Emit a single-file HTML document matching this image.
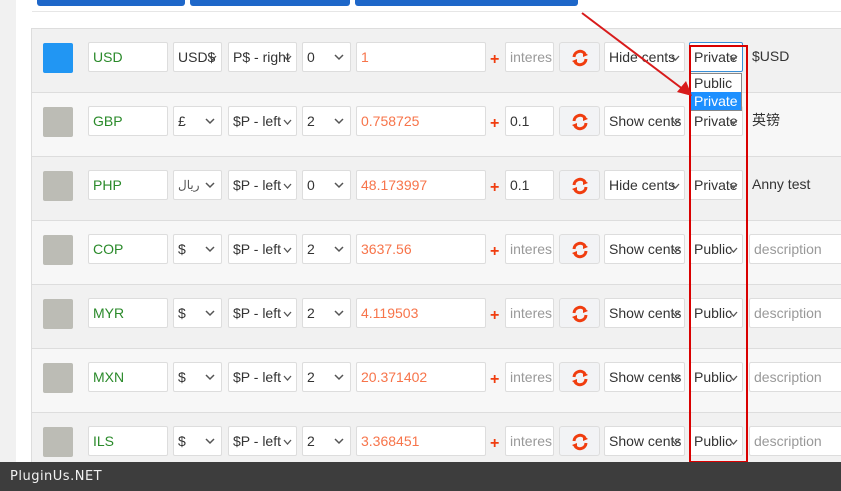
<!DOCTYPE html><html><head><meta charset="utf-8"><style>
*{box-sizing:border-box;margin:0;padding:0}
body{width:841px;height:491px;overflow:hidden;background:#fff;font-family:"Liberation Sans",Arial,sans-serif;font-size:14px;color:#333;position:relative}
.l{position:absolute;left:0;top:0;width:16px;height:491px;background:#f1f1f1}
.btn{position:absolute;top:0;height:6px;background:#1e67c9;border-radius:0 0 3px 3px}
.sep{position:absolute;left:32px;top:11px;width:809px;height:1px;background:#e6e6e6}
.row{position:absolute;left:31px;width:810px;height:64px;border-top:1px solid #ddd;border-left:1px solid #ddd}
.row.a{background:#f1f1f1}.row.b{background:#f7f7f7}
.e{position:absolute;top:13px;height:30px;background:#fff;border:1px solid #ddd;border-radius:2px;line-height:28px;padding-left:4px;white-space:nowrap;overflow:hidden}
.sw{position:absolute;left:11px;top:14px;width:30px;height:30px;border-radius:2px;background:#bcbcb5}
.g{color:#2a8a2a}.o{color:#f7744a}.ph{color:#999}
.ch{position:absolute;right:6px;top:11px}
.c2{position:absolute;right:4px;top:12px}
.plus{position:absolute;left:458px;top:22px;color:#f03d0f;font-weight:bold;font-size:16px}
.rf{position:absolute;left:527px;top:13px;width:41px;height:30px;background:#f2f3f5;border:1px solid #ddd;border-radius:3px}
.rf svg{position:absolute;left:11px;top:6px}
</style></head><body>
<div class="l"></div>
<div style="position:absolute;left:16px;top:0;width:15px;height:491px;background:#fff"></div>
<div class="btn" style="left:37px;width:148px"></div>
<div class="btn" style="left:190px;width:160px"></div>
<div class="btn" style="left:355px;width:223px"></div>
<div class="sep"></div>

<div class="row a" style="top:28px">
<div class="sw" style="background:#2196f3"></div>
<div class="e g" style="left:56px;width:80px">USD</div>
<div class="e" style="left:141px;width:49px">USD$<svg class="c2" width="9" height="6"><polyline points="1,1 4.5,5 8,1" fill="none" stroke="#555" stroke-width="1.3"/></svg></div>
<div class="e" style="left:196px;width:69px">P$ - right<svg class="c2" width="9" height="6"><polyline points="1,1 4.5,5 8,1" fill="none" stroke="#555" stroke-width="1.3"/></svg></div>
<div class="e" style="left:270px;width:49px">0<svg class="ch" width="10" height="7"><polyline points="1,1 5,5 9,1" fill="none" stroke="#555" stroke-width="1.5"/></svg></div>
<div class="e o" style="left:324px;width:130px">1</div>
<div class="plus">+</div>
<div class="e ph" style="left:473px;width:49px">interes</div>
<div class="rf"><svg width="18" height="18" viewBox="0 0 18 18"><path d="M3 8a6 6 0 0 1 11-3" fill="none" stroke="#f03d0f" stroke-width="3"/><path d="M15 10a6 6 0 0 1-11 3" fill="none" stroke="#f03d0f" stroke-width="3"/><polygon points="12,2 17,6 12,8" fill="#f03d0f"/><polygon points="6,16 1,12 6,10" fill="#f03d0f"/></svg></div>
<div class="e" style="left:572px;width:81px">Hide cents<svg class="c2" width="9" height="6"><polyline points="1,1 4.5,5 8,1" fill="none" stroke="#555" stroke-width="1.3"/></svg></div>
<div class="e" style="left:657px;width:54px;border-color:#3a8fd6">Private<svg class="c2" width="9" height="6"><polyline points="1,1 4.5,5 8,1" fill="none" stroke="#555" stroke-width="1.3"/></svg></div>
<div class="e" style="left:716px;width:100px;border:none;background:none">$USD</div>
</div>

<div class="row b" style="top:92px">
<div class="sw"></div>
<div class="e g" style="left:56px;width:80px">GBP</div>
<div class="e" style="left:141px;width:49px">£<svg class="ch" width="10" height="7"><polyline points="1,1 5,5 9,1" fill="none" stroke="#555" stroke-width="1.5"/></svg></div>
<div class="e" style="left:196px;width:69px">$P - left<svg class="c2" width="9" height="6"><polyline points="1,1 4.5,5 8,1" fill="none" stroke="#555" stroke-width="1.3"/></svg></div>
<div class="e" style="left:270px;width:49px">2<svg class="ch" width="10" height="7"><polyline points="1,1 5,5 9,1" fill="none" stroke="#555" stroke-width="1.5"/></svg></div>
<div class="e o" style="left:324px;width:130px">0.758725</div>
<div class="plus">+</div>
<div class="e" style="left:473px;width:49px">0.1</div>
<div class="rf"><svg width="18" height="18" viewBox="0 0 18 18"><path d="M3 8a6 6 0 0 1 11-3" fill="none" stroke="#f03d0f" stroke-width="3"/><path d="M15 10a6 6 0 0 1-11 3" fill="none" stroke="#f03d0f" stroke-width="3"/><polygon points="12,2 17,6 12,8" fill="#f03d0f"/><polygon points="6,16 1,12 6,10" fill="#f03d0f"/></svg></div>
<div class="e" style="left:572px;width:81px">Show cents<svg class="c2" width="9" height="6"><polyline points="1,1 4.5,5 8,1" fill="none" stroke="#555" stroke-width="1.3"/></svg></div>
<div class="e" style="left:657px;width:54px">Private<svg class="c2" width="9" height="6"><polyline points="1,1 4.5,5 8,1" fill="none" stroke="#555" stroke-width="1.3"/></svg></div>
<div class="e" style="left:716px;width:100px;border:none;background:none;font-family:'Liberation Sans','Noto Sans CJK SC',sans-serif">英镑</div>
</div>

<div class="row a" style="top:156px">
<div class="sw"></div>
<div class="e g" style="left:56px;width:80px">PHP</div>
<div class="e" style="left:141px;width:49px;font-size:12px;color:#555">ريال<svg class="ch" width="10" height="7"><polyline points="1,1 5,5 9,1" fill="none" stroke="#555" stroke-width="1.5"/></svg></div>
<div class="e" style="left:196px;width:69px">$P - left<svg class="c2" width="9" height="6"><polyline points="1,1 4.5,5 8,1" fill="none" stroke="#555" stroke-width="1.3"/></svg></div>
<div class="e" style="left:270px;width:49px">0<svg class="ch" width="10" height="7"><polyline points="1,1 5,5 9,1" fill="none" stroke="#555" stroke-width="1.5"/></svg></div>
<div class="e o" style="left:324px;width:130px">48.173997</div>
<div class="plus">+</div>
<div class="e" style="left:473px;width:49px">0.1</div>
<div class="rf"><svg width="18" height="18" viewBox="0 0 18 18"><path d="M3 8a6 6 0 0 1 11-3" fill="none" stroke="#f03d0f" stroke-width="3"/><path d="M15 10a6 6 0 0 1-11 3" fill="none" stroke="#f03d0f" stroke-width="3"/><polygon points="12,2 17,6 12,8" fill="#f03d0f"/><polygon points="6,16 1,12 6,10" fill="#f03d0f"/></svg></div>
<div class="e" style="left:572px;width:81px">Hide cents<svg class="c2" width="9" height="6"><polyline points="1,1 4.5,5 8,1" fill="none" stroke="#555" stroke-width="1.3"/></svg></div>
<div class="e" style="left:657px;width:54px">Private<svg class="c2" width="9" height="6"><polyline points="1,1 4.5,5 8,1" fill="none" stroke="#555" stroke-width="1.3"/></svg></div>
<div class="e" style="left:716px;width:100px;border:none;background:none">Anny test</div>
</div>

<div class="row b" style="top:220px">
<div class="sw"></div>
<div class="e g" style="left:56px;width:80px">COP</div>
<div class="e" style="left:141px;width:49px">$<svg class="ch" width="10" height="7"><polyline points="1,1 5,5 9,1" fill="none" stroke="#555" stroke-width="1.5"/></svg></div>
<div class="e" style="left:196px;width:69px">$P - left<svg class="c2" width="9" height="6"><polyline points="1,1 4.5,5 8,1" fill="none" stroke="#555" stroke-width="1.3"/></svg></div>
<div class="e" style="left:270px;width:49px">2<svg class="ch" width="10" height="7"><polyline points="1,1 5,5 9,1" fill="none" stroke="#555" stroke-width="1.5"/></svg></div>
<div class="e o" style="left:324px;width:130px">3637.56</div>
<div class="plus">+</div>
<div class="e ph" style="left:473px;width:49px">interes</div>
<div class="rf"><svg width="18" height="18" viewBox="0 0 18 18"><path d="M3 8a6 6 0 0 1 11-3" fill="none" stroke="#f03d0f" stroke-width="3"/><path d="M15 10a6 6 0 0 1-11 3" fill="none" stroke="#f03d0f" stroke-width="3"/><polygon points="12,2 17,6 12,8" fill="#f03d0f"/><polygon points="6,16 1,12 6,10" fill="#f03d0f"/></svg></div>
<div class="e" style="left:572px;width:81px">Show cents<svg class="c2" width="9" height="6"><polyline points="1,1 4.5,5 8,1" fill="none" stroke="#555" stroke-width="1.3"/></svg></div>
<div class="e" style="left:657px;width:54px">Public<svg class="c2" width="9" height="6"><polyline points="1,1 4.5,5 8,1" fill="none" stroke="#555" stroke-width="1.3"/></svg></div>
<div class="e ph" style="left:717px;width:100px;border-right:none">description</div>
</div>

<div class="row a" style="top:284px">
<div class="sw"></div>
<div class="e g" style="left:56px;width:80px">MYR</div>
<div class="e" style="left:141px;width:49px">$<svg class="ch" width="10" height="7"><polyline points="1,1 5,5 9,1" fill="none" stroke="#555" stroke-width="1.5"/></svg></div>
<div class="e" style="left:196px;width:69px">$P - left<svg class="c2" width="9" height="6"><polyline points="1,1 4.5,5 8,1" fill="none" stroke="#555" stroke-width="1.3"/></svg></div>
<div class="e" style="left:270px;width:49px">2<svg class="ch" width="10" height="7"><polyline points="1,1 5,5 9,1" fill="none" stroke="#555" stroke-width="1.5"/></svg></div>
<div class="e o" style="left:324px;width:130px">4.119503</div>
<div class="plus">+</div>
<div class="e ph" style="left:473px;width:49px">interes</div>
<div class="rf"><svg width="18" height="18" viewBox="0 0 18 18"><path d="M3 8a6 6 0 0 1 11-3" fill="none" stroke="#f03d0f" stroke-width="3"/><path d="M15 10a6 6 0 0 1-11 3" fill="none" stroke="#f03d0f" stroke-width="3"/><polygon points="12,2 17,6 12,8" fill="#f03d0f"/><polygon points="6,16 1,12 6,10" fill="#f03d0f"/></svg></div>
<div class="e" style="left:572px;width:81px">Show cents<svg class="c2" width="9" height="6"><polyline points="1,1 4.5,5 8,1" fill="none" stroke="#555" stroke-width="1.3"/></svg></div>
<div class="e" style="left:657px;width:54px">Public<svg class="c2" width="9" height="6"><polyline points="1,1 4.5,5 8,1" fill="none" stroke="#555" stroke-width="1.3"/></svg></div>
<div class="e ph" style="left:717px;width:100px;border-right:none">description</div>
</div>

<div class="row b" style="top:348px">
<div class="sw"></div>
<div class="e g" style="left:56px;width:80px">MXN</div>
<div class="e" style="left:141px;width:49px">$<svg class="ch" width="10" height="7"><polyline points="1,1 5,5 9,1" fill="none" stroke="#555" stroke-width="1.5"/></svg></div>
<div class="e" style="left:196px;width:69px">$P - left<svg class="c2" width="9" height="6"><polyline points="1,1 4.5,5 8,1" fill="none" stroke="#555" stroke-width="1.3"/></svg></div>
<div class="e" style="left:270px;width:49px">2<svg class="ch" width="10" height="7"><polyline points="1,1 5,5 9,1" fill="none" stroke="#555" stroke-width="1.5"/></svg></div>
<div class="e o" style="left:324px;width:130px">20.371402</div>
<div class="plus">+</div>
<div class="e ph" style="left:473px;width:49px">interes</div>
<div class="rf"><svg width="18" height="18" viewBox="0 0 18 18"><path d="M3 8a6 6 0 0 1 11-3" fill="none" stroke="#f03d0f" stroke-width="3"/><path d="M15 10a6 6 0 0 1-11 3" fill="none" stroke="#f03d0f" stroke-width="3"/><polygon points="12,2 17,6 12,8" fill="#f03d0f"/><polygon points="6,16 1,12 6,10" fill="#f03d0f"/></svg></div>
<div class="e" style="left:572px;width:81px">Show cents<svg class="c2" width="9" height="6"><polyline points="1,1 4.5,5 8,1" fill="none" stroke="#555" stroke-width="1.3"/></svg></div>
<div class="e" style="left:657px;width:54px">Public<svg class="c2" width="9" height="6"><polyline points="1,1 4.5,5 8,1" fill="none" stroke="#555" stroke-width="1.3"/></svg></div>
<div class="e ph" style="left:717px;width:100px;border-right:none">description</div>
</div>

<div class="row a" style="top:412px">
<div class="sw"></div>
<div class="e g" style="left:56px;width:80px">ILS</div>
<div class="e" style="left:141px;width:49px">$<svg class="ch" width="10" height="7"><polyline points="1,1 5,5 9,1" fill="none" stroke="#555" stroke-width="1.5"/></svg></div>
<div class="e" style="left:196px;width:69px">$P - left<svg class="c2" width="9" height="6"><polyline points="1,1 4.5,5 8,1" fill="none" stroke="#555" stroke-width="1.3"/></svg></div>
<div class="e" style="left:270px;width:49px">2<svg class="ch" width="10" height="7"><polyline points="1,1 5,5 9,1" fill="none" stroke="#555" stroke-width="1.5"/></svg></div>
<div class="e o" style="left:324px;width:130px">3.368451</div>
<div class="plus">+</div>
<div class="e ph" style="left:473px;width:49px">interes</div>
<div class="rf"><svg width="18" height="18" viewBox="0 0 18 18"><path d="M3 8a6 6 0 0 1 11-3" fill="none" stroke="#f03d0f" stroke-width="3"/><path d="M15 10a6 6 0 0 1-11 3" fill="none" stroke="#f03d0f" stroke-width="3"/><polygon points="12,2 17,6 12,8" fill="#f03d0f"/><polygon points="6,16 1,12 6,10" fill="#f03d0f"/></svg></div>
<div class="e" style="left:572px;width:81px">Show cents<svg class="c2" width="9" height="6"><polyline points="1,1 4.5,5 8,1" fill="none" stroke="#555" stroke-width="1.3"/></svg></div>
<div class="e" style="left:657px;width:54px">Public<svg class="c2" width="9" height="6"><polyline points="1,1 4.5,5 8,1" fill="none" stroke="#555" stroke-width="1.3"/></svg></div>
<div class="e ph" style="left:717px;width:100px;border-right:none">description</div>
</div>

<div style="position:absolute;left:690px;top:73px;width:52px;height:38px;background:#fff;border:1px solid #888;font-size:14px;line-height:18px">
<div style="padding-left:3px">Public</div>
<div style="padding-left:3px;background:#1e90ff;color:#fff">Private</div>
</div>
<div style="position:absolute;left:689px;top:45px;width:59px;height:418px;border:2px solid #d90000"></div>
<svg style="position:absolute;left:0;top:0" width="841" height="491"><line x1="582" y1="13" x2="684" y2="90" stroke="#d81b1b" stroke-width="2"/><polygon points="692,96 677,92 686,81" fill="#d81b1b"/></svg>
<div style="position:absolute;left:0;top:462px;width:841px;height:29px;background:#3d3d3d;color:#f2f2f2;line-height:29px;padding-left:10px;letter-spacing:.5px;font-family:'DejaVu Sans',sans-serif;font-size:13px">PluginUs.NET</div>
</body></html>
